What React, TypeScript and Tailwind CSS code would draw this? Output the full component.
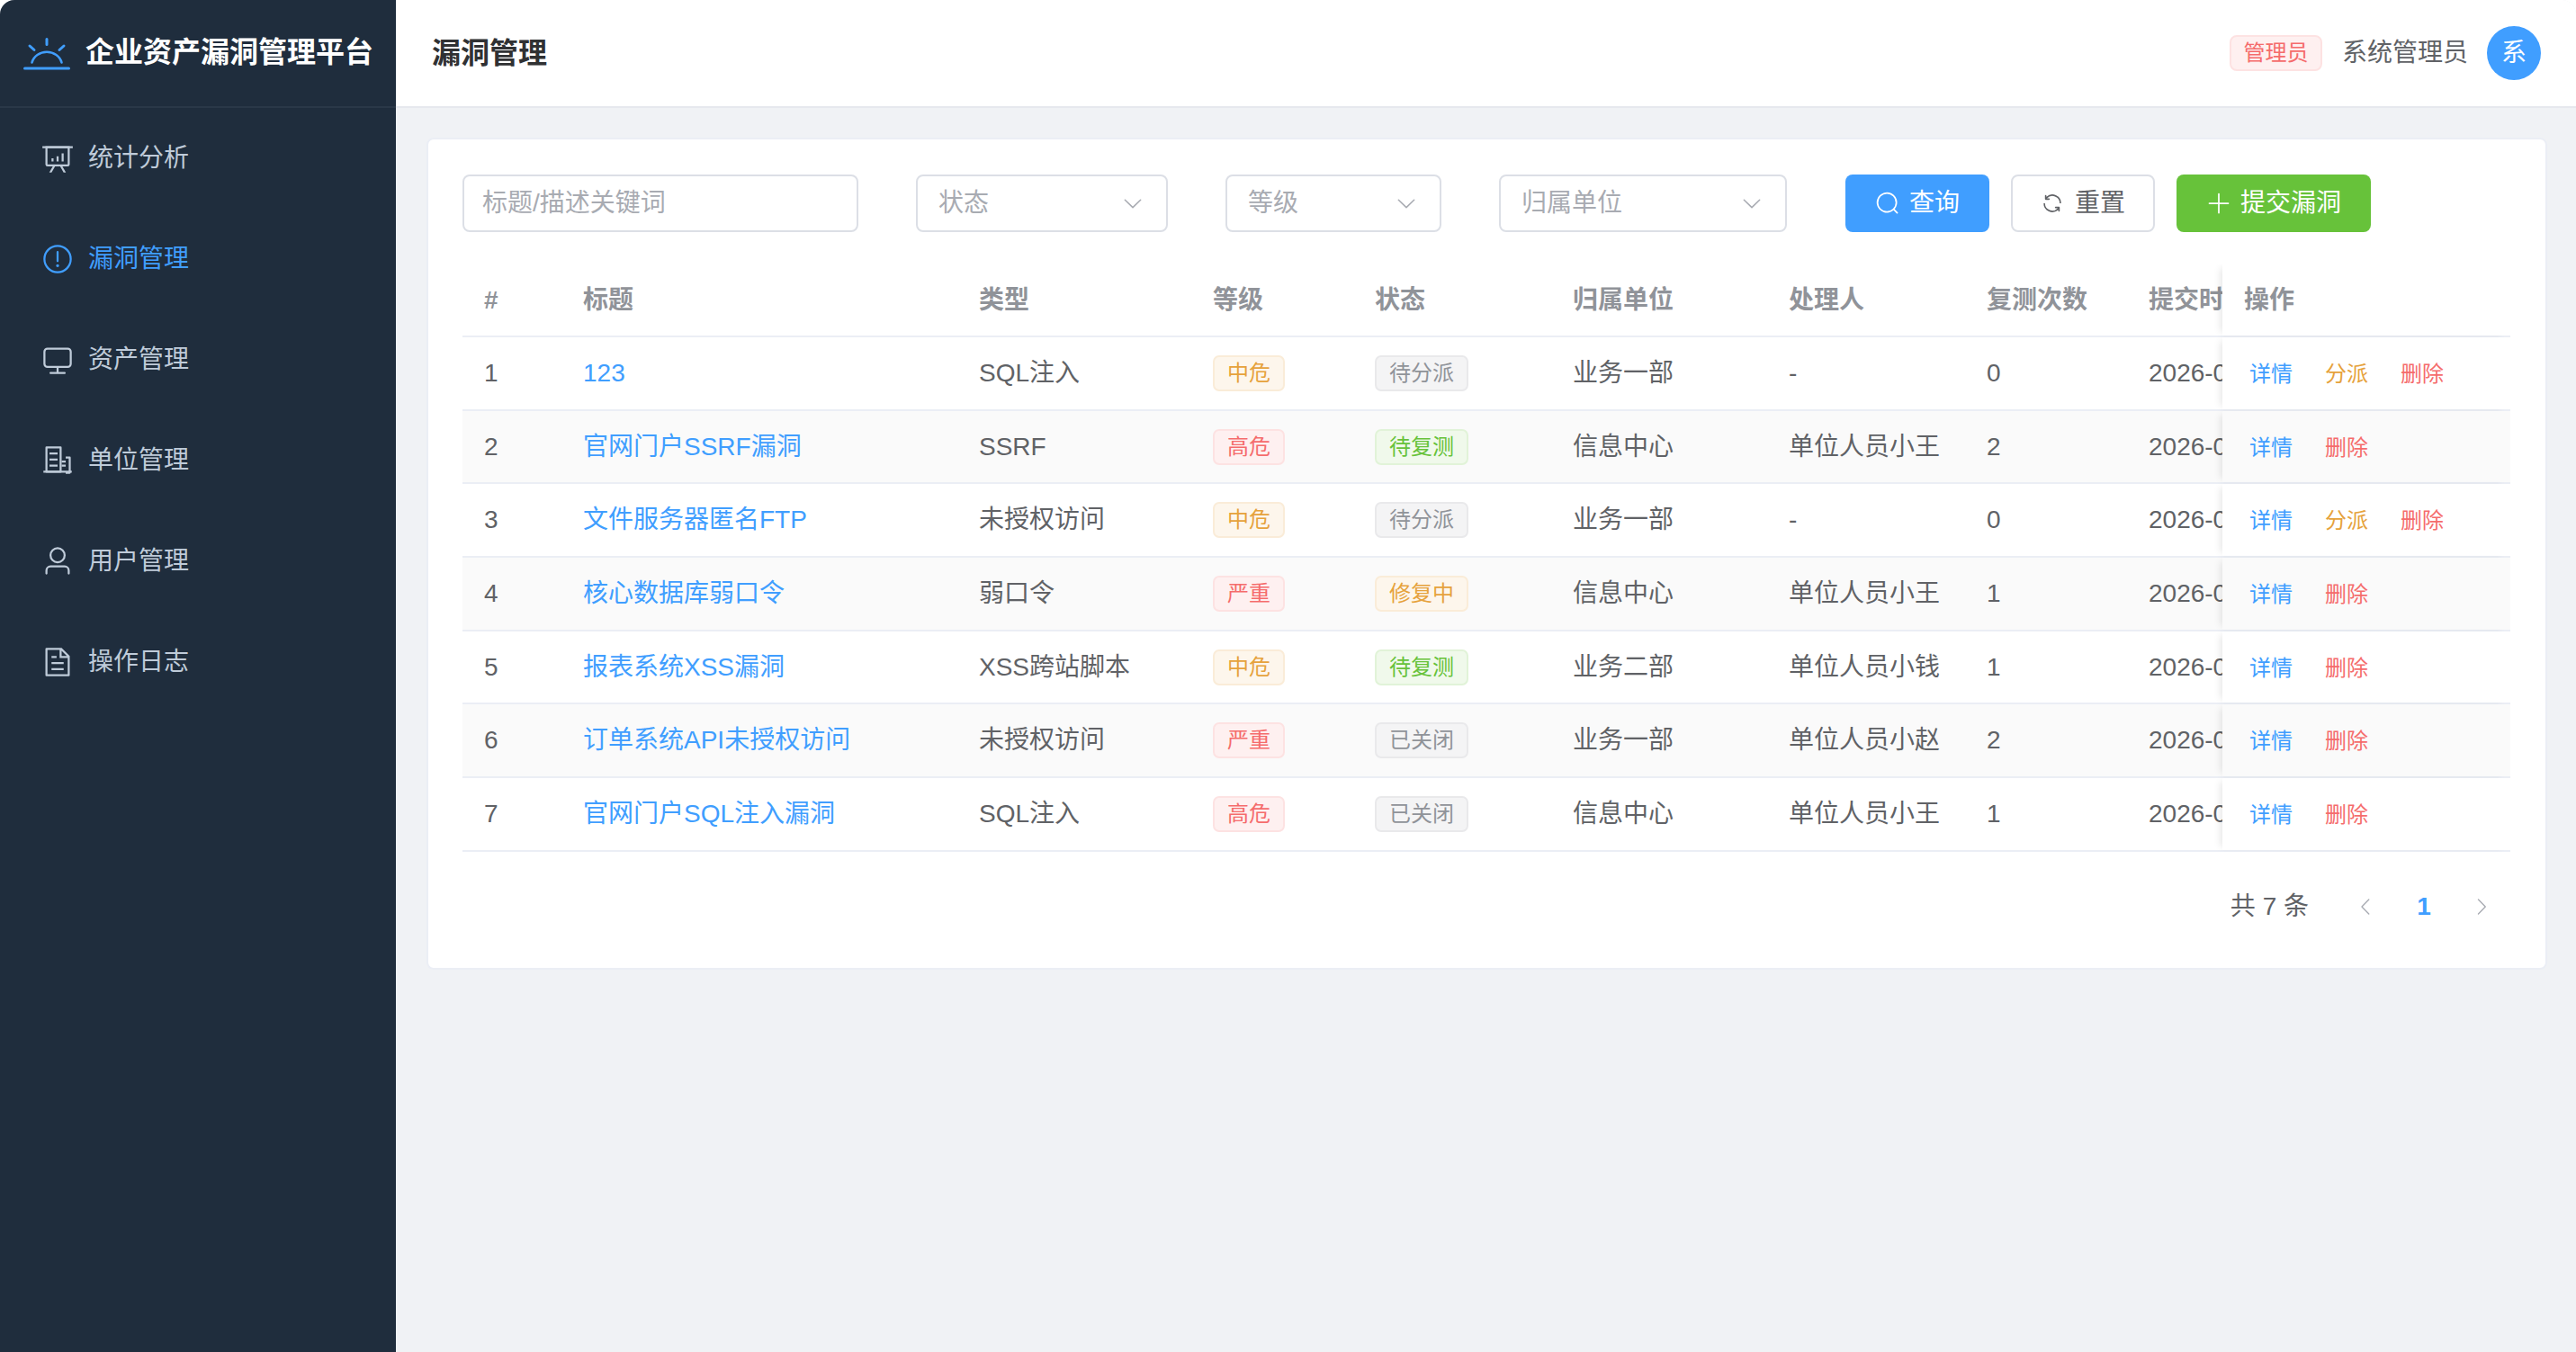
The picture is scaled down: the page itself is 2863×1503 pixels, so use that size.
import type { ReactNode } from 'react';

const icons: Record<string, string[]> = {
  board: [
    'M32 128h960v64H32z',
    'M192 192v512h640V192zm-64-64h768v576a64 64 0 0 1-64 64H192a64 64 0 0 1-64-64z',
    'M322.176 960H248.32l144.64-250.56 55.424 32zm453.888 0h-73.856L576 741.44l55.424-32z',
    'M320 512h64v96h-64zm160-64h64v160h-64zm160-96h64v256h-64z',
  ],
  warning: [
    'M512 64a448 448 0 1 1 0 896 448 448 0 0 1 0-896m0 832a384 384 0 0 0 0-768 384 384 0 0 0 0 768m48-176a48 48 0 1 1-96 0 48 48 0 0 1 96 0m-48-464a32 32 0 0 1 32 32v288a32 32 0 0 1-64 0V288a32 32 0 0 1 32-32',
  ],
  monitor: [
    'M544 768v128h192a32 32 0 1 1 0 64H288a32 32 0 1 1 0-64h192V768H192A128 128 0 0 1 64 640V256a128 128 0 0 1 128-128h640a128 128 0 0 1 128 128v384a128 128 0 0 1-128 128zM192 192a64 64 0 0 0-64 64v384a64 64 0 0 0 64 64h640a64 64 0 0 0 64-64V256a64 64 0 0 0-64-64z',
  ],
  office: [
    'M192 128v704h384V128zm-32-64h448a32 32 0 0 1 32 32v768a32 32 0 0 1-32 32H160a32 32 0 0 1-32-32V96a32 32 0 0 1 32-32',
    'M256 256h256v64H256zm0 192h256v64H256zm0 192h256v64H256zm384-128h128v64H640zm0 128h128v64H640zM768 384h128a32 32 0 0 1 32 32v480a32 32 0 0 1-32 32H768v-64h96V448h-96zM64 832h896v64H64z',
  ],
  user: [
    'M512 512a192 192 0 1 0 0-384 192 192 0 0 0 0 384m0 64a256 256 0 1 1 0-512 256 256 0 0 1 0 512m320 320v-96a96 96 0 0 0-96-96H288a96 96 0 0 0-96 96v96a32 32 0 1 1-64 0v-96a160 160 0 0 1 160-160h448a160 160 0 0 1 160 160v96a32 32 0 1 1-64 0',
  ],
  document: [
    'M832 384H576V128H192v768h640zm-26.496-64L640 154.496V320zM160 64h480l256 256v608a32 32 0 0 1-32 32H160a32 32 0 0 1-32-32V96a32 32 0 0 1 32-32m160 448h384v64H320zm0-192h160v64H320zm0 384h384v64H320z',
  ],
  search: [
    'm795.904 750.72 124.992 124.928a32 32 0 0 1-45.248 45.248L750.656 795.904a416 416 0 1 1 45.248-45.248zM480 832a352 352 0 1 0 0-704 352 352 0 0 0 0 704',
  ],
  refresh: [
    'M771.776 794.88A384 384 0 0 1 128 512h64a320 320 0 0 0 555.712 216.448H654.72a32 32 0 1 1 0-64h149.056a32 32 0 0 1 32 32v148.928a32 32 0 1 1-64 0v-50.56zM276.288 295.616h92.992a32 32 0 0 1 0 64H220.16a32 32 0 0 1-32-32V178.56a32 32 0 0 1 64 0v50.56A384 384 0 0 1 896.128 512h-64a320 320 0 0 0-555.776-216.384z',
  ],
  plus: [
    'M480 480V128a32 32 0 0 1 64 0v352h352a32 32 0 1 1 0 64H544v352a32 32 0 1 1-64 0V544H128a32 32 0 0 1 0-64z',
  ],
  down: [
    'M831.872 340.864 512 652.672 192.128 340.864a30.592 30.592 0 0 0-42.752 0 29.12 29.12 0 0 0 0 41.6L489.664 714.24a32 32 0 0 0 44.672 0l340.288-331.712a29.12 29.12 0 0 0 0-41.728 30.592 30.592 0 0 0-42.752 0z',
  ],
  left: [
    'M609.408 149.376 277.76 489.6a32 32 0 0 0 0 44.672l331.648 340.352a29.12 29.12 0 0 0 41.728 0 30.592 30.592 0 0 0 0-42.752L339.264 511.936l311.872-319.872a30.592 30.592 0 0 0 0-42.688 29.12 29.12 0 0 0-41.728 0z',
  ],
  right: [
    'M340.864 149.312a30.592 30.592 0 0 0 0 42.752L652.736 512 340.864 831.872a30.592 30.592 0 0 0 0 42.752 29.12 29.12 0 0 0 41.728 0L714.24 534.336a32 32 0 0 0 0-44.672L382.592 149.376a29.12 29.12 0 0 0-41.728 0z',
  ],
};

function Icon({ name, className }: { name: string; className: string }) {
  return (
    <svg viewBox="0 0 1024 1024" fill="currentColor" className={className}>
      {icons[name].map((d) => (
        <path key={d} d={d} />
      ))}
    </svg>
  );
}

const menu = [
  { icon: 'board', label: '统计分析' },
  { icon: 'warning', label: '漏洞管理', active: true },
  { icon: 'monitor', label: '资产管理' },
  { icon: 'office', label: '单位管理' },
  { icon: 'user', label: '用户管理' },
  { icon: 'document', label: '操作日志' },
];

const tagStyles: Record<string, string> = {
  warning: 'bg-[#fdf6ec] border-[#faecd8] text-[#e6a23c]',
  danger: 'bg-[#fef0f0] border-[#fde2e2] text-[#f56c6c]',
  success: 'bg-[#f0f9eb] border-[#e1f3d8] text-[#67c23a]',
  info: 'bg-[#f4f4f5] border-[#e9e9eb] text-[#909399]',
};

const levelTone: Record<string, string> = { 中危: 'warning', 高危: 'danger', 严重: 'danger' };
const statusTone: Record<string, string> = { 待分派: 'info', 待复测: 'success', 修复中: 'warning', 已关闭: 'info' };

const rows = [
  { title: '123', type: 'SQL注入', level: '中危', status: '待分派', unit: '业务一部', owner: '-', retest: 0, assign: true },
  { title: '官网门户SSRF漏洞', type: 'SSRF', level: '高危', status: '待复测', unit: '信息中心', owner: '单位人员小王', retest: 2 },
  { title: '文件服务器匿名FTP', type: '未授权访问', level: '中危', status: '待分派', unit: '业务一部', owner: '-', retest: 0, assign: true },
  { title: '核心数据库弱口令', type: '弱口令', level: '严重', status: '修复中', unit: '信息中心', owner: '单位人员小王', retest: 1 },
  { title: '报表系统XSS漏洞', type: 'XSS跨站脚本', level: '中危', status: '待复测', unit: '业务二部', owner: '单位人员小钱', retest: 1 },
  { title: '订单系统API未授权访问', type: '未授权访问', level: '严重', status: '已关闭', unit: '业务一部', owner: '单位人员小赵', retest: 2 },
  { title: '官网门户SQL注入漏洞', type: 'SQL注入', level: '高危', status: '已关闭', unit: '信息中心', owner: '单位人员小王', retest: 1 },
];

function Tag({ tone, width, children }: { tone: string; width: string; children: ReactNode }) {
  return (
    <span className={`flex h-[40px] items-center justify-center rounded-[7px] border-2 text-[24px] ${width} ${tagStyles[tone]}`}>
      {children}
    </span>
  );
}

function Cell({ width, children }: { width: string; children?: ReactNode }) {
  return <div className={`flex shrink-0 items-center overflow-hidden whitespace-nowrap pl-[24px] ${width}`}>{children}</div>;
}

function SelectBox({ label, width }: { label: string; width: string }) {
  return (
    <div className={`flex h-[64px] items-center justify-between rounded-[8px] border-2 border-[#dcdfe6] bg-white pl-[23px] pr-[24px] text-[28px] text-[#a8abb2] ${width}`}>
      <span>{label}</span>
      <Icon name="down" className="h-[26px] w-[26px] text-[#a8abb2]" />
    </div>
  );
}

export default function App() {
  return (
    <div className="bg-white font-['Liberation_Sans','Noto_Sans_CJK_SC',sans-serif]">
      <div className="flex h-[1503px] overflow-hidden rounded-t-[16px] bg-[#f0f2f5]">
        {/* sidebar */}
        <aside className="w-[440px] shrink-0 bg-[#1f2d3d]">
          <div className="flex h-[120px] items-center gap-[17px] border-b-2 border-[#2a3848] pl-[26px] pb-[2px]">
            <svg width="52" height="40" viewBox="0 0 52 40" fill="none" stroke="#409eff" strokeLinecap="round" className="shrink-0">
              <path d="M9.5 31.5a17 15.5 0 0 1 33 0" strokeWidth="2.6" />
              <path d="M26 5.5v6M7 13l5 4.5M45 13l-5 4.5" strokeWidth="3" />
              <path d="M1.5 38h49" strokeWidth="3" />
            </svg>
            <span className="whitespace-nowrap text-[32px] font-bold text-white">企业资产漏洞管理平台</span>
          </div>
          <nav className="flex flex-col">
            {menu.map((m) => (
              <div
                key={m.label}
                className={`flex h-[112px] items-center gap-[16px] pl-[46px] text-[28px] ${m.active ? 'text-[#409eff]' : 'text-[#bfcbd9]'}`}
              >
                <Icon name={m.icon} className="h-[36px] w-[36px]" />
                <span>{m.label}</span>
              </div>
            ))}
          </nav>
        </aside>

        <div className="flex min-w-0 flex-1 flex-col">
          {/* header */}
          <header className="flex h-[120px] shrink-0 items-center justify-between border-b-2 border-[#e6e8ee] bg-white pl-[40px] pr-[39px]">
            <span className="text-[32px] font-bold text-[#303133]">漏洞管理</span>
            <div className="flex items-center">
              <span className="flex h-[40px] w-[103px] items-center justify-center rounded-[8px] border-2 border-[#fde2e2] bg-[#fef0f0] text-[24px] text-[#f56c6c]">
                管理员
              </span>
              <span className="ml-[22px] text-[28px] text-[#606266]">系统管理员</span>
              <span className="ml-[21px] flex h-[60px] w-[60px] items-center justify-center rounded-full bg-[#409eff] text-[28px] text-white">
                系
              </span>
            </div>
          </header>

          <main className="pl-[34px] pr-[32px] pt-[33px]">
            <section className="rounded-[8px] border-2 border-[#ebeef5] bg-white pb-[36px] pl-[38px] pr-[39px] pt-[39px]">
              {/* filters */}
              <div className="flex items-center">
                <input
                  placeholder="标题/描述关键词"
                  className="h-[64px] w-[440px] rounded-[8px] border-2 border-[#dcdfe6] bg-white px-[20px] text-[28px] outline-none placeholder:text-[#a8abb2]"
                />
                <div className="ml-[64px]">
                  <SelectBox label="状态" width="w-[280px]" />
                </div>
                <div className="ml-[64px]">
                  <SelectBox label="等级" width="w-[240px]" />
                </div>
                <div className="ml-[64px]">
                  <SelectBox label="归属单位" width="w-[320px]" />
                </div>
                <button className="ml-[65px] flex h-[64px] w-[160px] items-center justify-center gap-[10px] rounded-[8px] bg-[#409eff] text-[28px] text-white">
                  <Icon name="search" className="h-[28px] w-[28px]" />
                  查询
                </button>
                <button className="ml-[24px] flex h-[64px] w-[160px] items-center justify-center gap-[12px] rounded-[8px] border-2 border-[#dcdfe6] bg-white text-[28px] text-[#606266]">
                  <Icon name="refresh" className="h-[26px] w-[26px]" />
                  重置
                </button>
                <button className="ml-[24px] flex h-[64px] w-[216px] items-center justify-center gap-[10px] rounded-[8px] bg-[#67c23a] text-[28px] text-white">
                  <Icon name="plus" className="h-[28px] w-[28px]" />
                  提交漏洞
                </button>
              </div>

              {/* table */}
              <div className="mt-[36px] w-[2276px] overflow-hidden text-[28px] text-[#606266]">
                <div className="flex h-[81px] border-b-2 border-[#ebeef5] font-bold text-[#909399]">
                  <Cell width="w-[110px]">#</Cell>
                  <Cell width="w-[440px]">标题</Cell>
                  <Cell width="w-[260px]">类型</Cell>
                  <Cell width="w-[180px]">等级</Cell>
                  <Cell width="w-[220px]">状态</Cell>
                  <Cell width="w-[240px]">归属单位</Cell>
                  <Cell width="w-[220px]">处理人</Cell>
                  <Cell width="w-[180px]">复测次数</Cell>
                  <Cell width="w-[106px]">提交时间</Cell>
                  <div className="flex w-[320px] shrink-0 items-center bg-white pl-[24px] shadow-[-6px_0_8px_-4px_rgba(0,0,0,0.1)]">操作</div>
                </div>
                {rows.map((r, i) => (
                  <div key={r.title} className={`flex h-[81.7px] border-b-2 border-[#ebeef5] ${i % 2 === 1 ? 'bg-[#fafafa]' : 'bg-white'}`}>
                    <Cell width="w-[110px]">{i + 1}</Cell>
                    <Cell width="w-[440px]">
                      <span className="text-[#409eff]">{r.title}</span>
                    </Cell>
                    <Cell width="w-[260px]">{r.type}</Cell>
                    <Cell width="w-[180px]">
                      <Tag tone={levelTone[r.level]} width="w-[80px]">{r.level}</Tag>
                    </Cell>
                    <Cell width="w-[220px]">
                      <Tag tone={statusTone[r.status]} width="w-[104px]">{r.status}</Tag>
                    </Cell>
                    <Cell width="w-[240px]">{r.unit}</Cell>
                    <Cell width="w-[220px]">{r.owner}</Cell>
                    <Cell width="w-[180px]">{r.retest}</Cell>
                    <Cell width="w-[106px]">2026-03-18 10:20</Cell>
                    <div
                      className={`flex w-[320px] shrink-0 items-center gap-[36px] pl-[30px] pt-[2px] text-[24px] shadow-[-6px_0_8px_-4px_rgba(0,0,0,0.1)] ${i % 2 === 1 ? 'bg-[#fafafa]' : 'bg-white'}`}
                    >
                      <span className="text-[#409eff]">详情</span>
                      {r.assign && <span className="text-[#e6a23c]">分派</span>}
                      <span className="text-[#f56c6c]">删除</span>
                    </div>
                  </div>
                ))}
              </div>

              {/* pagination */}
              <div className="mt-[29px] flex h-[64px] w-[2276px] items-center justify-end text-[28px] text-[#606266]">
                <span className="mr-[32px]">共 7 条</span>
                <span className="flex w-[64px] justify-center text-[#a8abb2]">
                  <Icon name="left" className="h-[24px] w-[24px]" />
                </span>
                <span className="flex w-[64px] justify-center font-bold text-[#409eff]">1</span>
                <span className="flex w-[64px] justify-center text-[#a8abb2]">
                  <Icon name="right" className="h-[24px] w-[24px]" />
                </span>
              </div>
            </section>
          </main>
        </div>
      </div>
    </div>
  );
}
